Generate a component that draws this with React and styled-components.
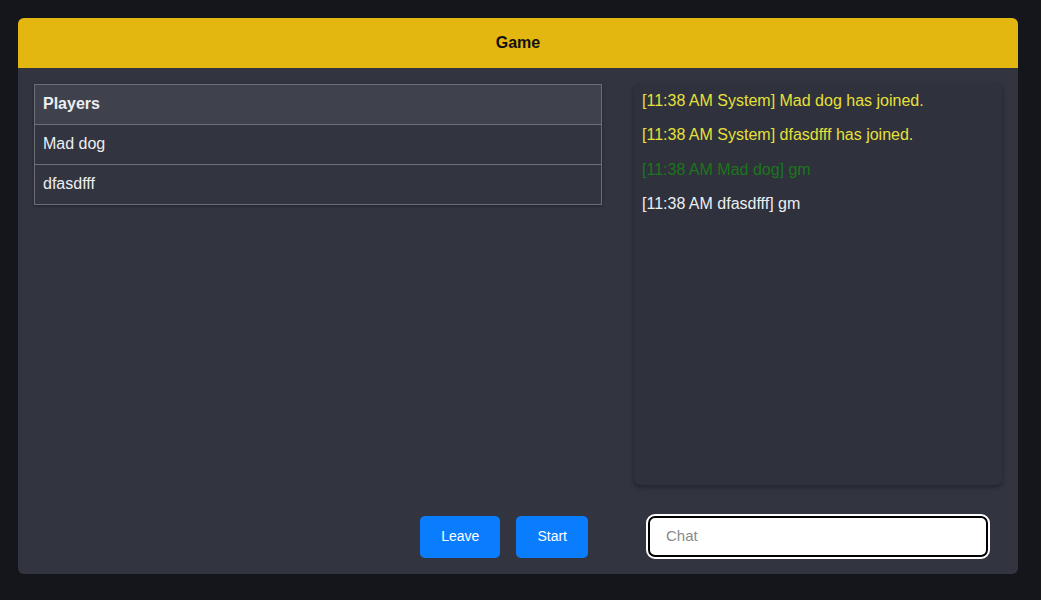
import styled, { createGlobalStyle } from 'styled-components'

const GlobalStyle = createGlobalStyle`
    body {
        margin: 0;
        background: #15161c;
        font-family: "Liberation Sans", Arial, sans-serif;
    }
`

const Page = styled.div`
    padding: 18px 23px 26px 18px;
`

const Card = styled.div`
    background: #32343f;
    border-radius: 6px;
    overflow: hidden;
    block-size: 556px;
    display: flex;
    flex-direction: column;
`

const Header = styled.div`
    background: #e4b610;
    block-size: 50px;
    display: flex;
    align-items: center;
    justify-content: center;
    font-weight: bold;
    font-size: 16px;
    color: #111;
`

const Body = styled.div`
    flex: 1;
    display: grid;
    grid-template-columns: 568px 368px;
    grid-template-rows: 1fr auto;
    column-gap: 32px;
    row-gap: 31px;
    padding: 16px;
`

const PlayerTable = styled.table`
    align-self: start;
    inline-size: 100%;
    border-collapse: collapse;
    box-shadow: 0 1px 3px rgba(0, 0, 0, 0.35);
    color: #eceef2;
    font-size: 16px;
    th, td {
        border: 1px solid #6d6f78;
        block-size: 37px;
        padding: 0 8px 2px;
        text-align: left;
    }
    th {
        background: #3f424d;
        font-weight: bold;
    }
`

const ChatLog = styled.div`
    background: #2f313c;
    border-radius: 6px;
    box-shadow: 0 2px 5px rgba(0, 0, 0, 0.35);
    padding: 8px 8px;
    overflow-y: auto;
`

const Message = styled.p`
    margin: 0 0 16px;
    font-size: 16px;
    line-height: 18.4px;
    color: ${({ $tone }) => $tone};
`

const Actions = styled.div`
    display: flex;
    justify-content: flex-end;
    gap: 16px;
    padding-right: 14px;
`

const Button = styled.button`
    background: #0a7dff;
    color: #fff;
    border: none;
    border-radius: 5px;
    block-size: 42px;
    padding: 0 ${({ $pad }) => $pad}px 2px;
    font-family: "Liberation Sans", Arial, sans-serif;
    font-size: 14px;
`

const ChatBar = styled.div`
    padding: 0 14px;
`

const ChatInput = styled.input`
    box-sizing: border-box;
    inline-size: 100%;
    block-size: 41px;
    border: 2px solid #000;
    outline: 2px solid #fff;
    border-radius: 7px;
    background: #fff;
    padding: 0 16px 2px 16px;
    font-family: "Liberation Sans", Arial, sans-serif;
    font-size: 15px;
    color: #222;
    &::placeholder {
        color: #8a8a8a;
    }
`

const players = ['Mad dog', 'dfasdfff']

const messages = [
    { text: '[11:38 AM System] Mad dog has joined.', tone: '#e6e03a' },
    { text: '[11:38 AM System] dfasdfff has joined.', tone: '#e6e03a' },
    { text: '[11:38 AM Mad dog] gm', tone: '#1b761b' },
    { text: '[11:38 AM dfasdfff] gm', tone: '#eceef2' },
]

function App() {
    return (
        <Page>
            <GlobalStyle />
            <Card>
                <Header>Game</Header>
                <Body>
                    <PlayerTable>
                        <thead>
                            <tr><th>Players</th></tr>
                        </thead>
                        <tbody>
                            {players.map((name) => (
                                <tr key={name}><td>{name}</td></tr>
                            ))}
                        </tbody>
                    </PlayerTable>
                    <ChatLog>
                        {messages.map((m, i) => (
                            <Message key={i} $tone={m.tone}>{m.text}</Message>
                        ))}
                    </ChatLog>
                    <Actions>
                        <Button $pad={21}>Leave</Button>
                        <Button $pad={21}>Start</Button>
                    </Actions>
                    <ChatBar>
                        <ChatInput placeholder='Chat' />
                    </ChatBar>
                </Body>
            </Card>
        </Page>
    )
}

export default App
